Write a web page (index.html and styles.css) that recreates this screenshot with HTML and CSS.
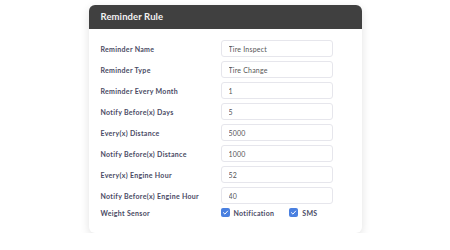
FILE: index.html
```html
<!DOCTYPE html>
<html lang="en">
<head>
  <meta charset="UTF-8">
  <title>Reminder Rule</title>
  <link rel="stylesheet" href="styles.css">
</head>
<body>
  <div class="card">
    <div class="card-head">Reminder Rule</div>
    <form class="rule-form">
      <label>Reminder Name</label>
      <input type="text" value="Tire Inspect">
      <label>Reminder Type</label>
      <input type="text" value="Tire Change">
      <label>Reminder Every Month</label>
      <input type="text" value="1">
      <label>Notify Before(x) Days</label>
      <input type="text" value="5">
      <label>Every(x) Distance</label>
      <input type="text" value="5000">
      <label>Notify Before(x) Distance</label>
      <input type="text" value="1000">
      <label>Every(x) Engine Hour</label>
      <input type="text" value="52">
      <label>Notify Before(x) Engine Hour</label>
      <input type="text" value="40">
      <label>Weight Sensor</label>
      <div class="checks">
        <span class="check"><span class="box"><svg viewBox="0 0 10 10" width="7" height="7"><path d="M2 5.2 L4.2 7.3 L8 3" fill="none" stroke="#fff" stroke-width="1.4" stroke-linecap="round" stroke-linejoin="round"/></svg></span>Notification</span>
        <span class="check"><span class="box"><svg viewBox="0 0 10 10" width="7" height="7"><path d="M2 5.2 L4.2 7.3 L8 3" fill="none" stroke="#fff" stroke-width="1.4" stroke-linecap="round" stroke-linejoin="round"/></svg></span>SMS</span>
      </div>
    </form>
  </div>
</body>
</html>
```

FILE: styles.css
```css
body { margin: 0; background: #fff; font-family: Lato, "Noto Sans", sans-serif; }
.card { width: 273px; margin: 5px auto 0; background: #fff; border-radius: 6px; box-shadow: 0 3px 10px rgba(0,0,0,0.12); overflow: hidden; padding-bottom: 16px; }
.card-head { background: #404040; color: #f2f2f2; font-size: 9.5px; font-weight: 700; letter-spacing: 0.1px; height: 24px; line-height: 24px; padding-left: 12px; }
.rule-form { display: grid; grid-template-columns: 120px 112px; row-gap: 4px; padding: 11px 0 0 12px; align-items: center; }
.rule-form label { font-size: 7px; font-weight: 700; letter-spacing: 0.3px; color: #4a4a64; }
.rule-form input { height: 17px; box-sizing: border-box; border: 1px solid #e6e6ec; border-radius: 3px; padding: 0 7px; font-family: inherit; font-size: 7px; letter-spacing: 0.2px; color: #555; margin: 0; outline: none; }
.checks { display: flex; gap: 15px; align-items: center; height: 9px; }
.check { display: flex; align-items: center; gap: 4px; font-size: 7px; font-weight: 700; letter-spacing: 0.3px; color: #4a4a64; }
.box { width: 9px; height: 9px; border-radius: 2px; background: #4a80e0; display: flex; align-items: center; justify-content: center; }
```
